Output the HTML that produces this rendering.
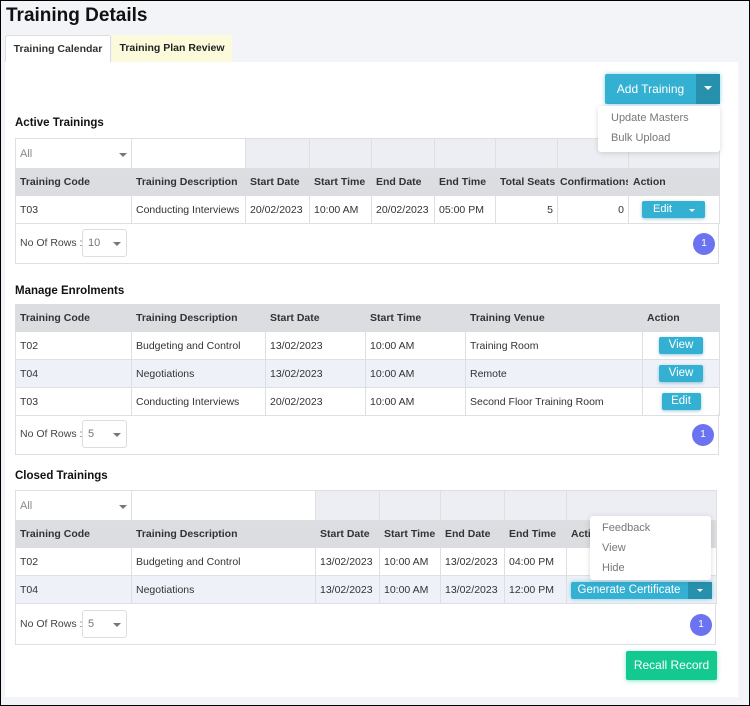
<!DOCTYPE html>
<html><head><style>
*{box-sizing:border-box;margin:0;padding:0}
body{width:750px;height:706px;overflow:hidden;background:#f3f4f8;font-family:"Liberation Sans",sans-serif;font-size:11px;color:#222;position:relative}
.frame{position:absolute;left:0;top:0;width:750px;height:706px;border:1px solid #000;z-index:10;pointer-events:none}
.a{position:absolute}
h1{position:absolute;left:6px;top:5px;font-size:19px;font-weight:bold;color:#111}
.tab{position:absolute;top:35px;height:27px;font-size:10.5px;font-weight:bold;line-height:26px;text-align:center;border-radius:3px 3px 0 0}
.panel{position:absolute;left:5px;top:62px;width:733px;height:635px;background:#fff}
.lbl{position:absolute;left:15px;font-size:11.5px;font-weight:bold;color:#111}
table{position:absolute;border-collapse:collapse;table-layout:fixed;left:15px}
td{border:1px solid #dedfe3;padding:0 4px;white-space:nowrap;overflow:hidden;font-size:10.5px;color:#333}
tr.f td{background:#eceef3;height:30px}
tr.f td.w{background:#fff;color:#888;font-size:11px}
tr.h td{background:#dcdde0;font-weight:bold;height:27px;color:#333;border-color:#dcdde0}
tr.r td{height:28px;background:#fff}
tr.alt td{background:#eef1f8}
.r2{text-align:right}
.car{float:right;width:0;height:0;border-left:4px solid transparent;border-right:4px solid transparent;border-top:4px solid #777;margin-top:5px}
.box{position:absolute;border:1px solid #dedfe3}
.nor{position:absolute;left:20px;color:#444;font-size:10.5px}
.sel{position:absolute;left:82px;width:45px;height:28px;border:1px solid #ddd;border-radius:3px;color:#777;font-size:11px;padding:7px 5px}
.badge{position:absolute;width:22px;height:22px;border-radius:50%;background:#6b73f0;color:#fff;font-size:10px;text-align:center;line-height:22px}
.btn{background:#34b0d2;color:#fff;border-radius:2px;text-align:center;box-shadow:0 1px 3px rgba(0,120,160,.4);font-size:11px;display:inline-block}
.dd{position:absolute;background:#fff;box-shadow:0 1px 6px rgba(0,0,0,.15);border-radius:3px;color:#777;font-size:11px;z-index:5}
.wc{border-left:4px solid transparent;border-right:4px solid transparent;border-top:4px solid #fff;width:0;height:0;display:inline-block}
</style></head><body>
<div class="frame"></div>
<h1>Training Details</h1>
<div class="tab" style="left:5px;width:106px;background:#fff;border:1px solid #ddd;border-bottom:none;color:#333">Training Calendar</div>
<div class="tab" style="left:112px;width:120px;background:#fbfbdc;color:#222">Training Plan Review</div>
<div class="panel"></div>

<div class="a" style="left:605px;top:74px;width:115px;height:30px;background:#34b0d2;box-shadow:0 0 4px rgba(52,176,210,.6);border-radius:2px"></div>
<div class="a" style="left:605px;top:74px;width:91px;height:30px;color:#fff;font-size:12px;text-align:center;line-height:30px">Add Training</div>
<div class="a" style="left:696px;top:74px;width:24px;height:30px;background:#2791ad;text-align:center;line-height:27px"><span class="wc"></span></div>
<div class="dd" style="left:598px;top:106px;width:122px;height:46px;padding:2px 13px;line-height:20px">Update Masters<br>Bulk Upload</div>

<div class="lbl" style="top:117px">Active Trainings</div>
<table style="top:138px;width:704px">
<colgroup><col style="width:116px"><col style="width:114px"><col style="width:64px"><col style="width:62px"><col style="width:63px"><col style="width:61px"><col style="width:62px"><col style="width:71px"><col style="width:91px"></colgroup>
<tr class="f"><td class="w">All<span class="car"></span></td><td class="w"></td><td></td><td></td><td></td><td></td><td></td><td></td><td></td></tr>
<tr class="h"><td>Training Code</td><td>Training Description</td><td>Start Date</td><td>Start Time</td><td>End Date</td><td>End Time</td><td>Total Seats</td><td style="padding:0 2px">Confirmations</td><td>Action</td></tr>
<tr class="r"><td>T03</td><td>Conducting Interviews</td><td>20/02/2023</td><td>10:00 AM</td><td>20/02/2023</td><td>05:00 PM</td><td class="r2">5</td><td class="r2">0</td><td><span class="btn" style="width:63px;height:17px;line-height:17px;margin-left:9px;text-align:left;padding-left:11px">Edit <span class="wc" style="margin-left:14px;border-width:3px;border-top-width:3px"></span></span></td></tr>
</table>
<div class="box" style="left:15px;top:223px;width:704px;height:41px;border-top:none"></div>
<div class="nor" style="top:237px">No Of Rows :</div>
<div class="sel" style="top:229px">10<span class="car"></span></div>
<div class="badge" style="left:693px;top:233px">1</div>

<div class="lbl" style="top:285px">Manage Enrolments</div>
<table style="top:304px;width:704px">
<colgroup><col style="width:116px"><col style="width:134px"><col style="width:100px"><col style="width:100px"><col style="width:177px"><col style="width:77px"></colgroup>
<tr class="h"><td>Training Code</td><td>Training Description</td><td>Start Date</td><td>Start Time</td><td>Training Venue</td><td>Action</td></tr>
<tr class="r"><td>T02</td><td>Budgeting and Control</td><td>13/02/2023</td><td>10:00 AM</td><td>Training Room</td><td style="text-align:center"><span class="btn" style="width:44px;height:17px;line-height:17px;font-size:11.5px">View</span></td></tr>
<tr class="r alt"><td>T04</td><td>Negotiations</td><td>13/02/2023</td><td>10:00 AM</td><td>Remote</td><td style="text-align:center"><span class="btn" style="width:44px;height:17px;line-height:17px;font-size:11.5px">View</span></td></tr>
<tr class="r"><td>T03</td><td>Conducting Interviews</td><td>20/02/2023</td><td>10:00 AM</td><td>Second Floor Training Room</td><td style="text-align:center"><span class="btn" style="width:39px;height:17px;line-height:17px;font-size:11.5px">Edit</span></td></tr>
</table>
<div class="box" style="left:15px;top:414px;width:704px;height:41px;border-top:none"></div>
<div class="nor" style="top:428px">No Of Rows :</div>
<div class="sel" style="top:420px">5<span class="car"></span></div>
<div class="badge" style="left:692px;top:424px">1</div>

<div class="lbl" style="top:470px">Closed Trainings</div>
<table style="top:490px;width:701px">
<colgroup><col style="width:116px"><col style="width:184px"><col style="width:64px"><col style="width:61px"><col style="width:64px"><col style="width:62px"><col style="width:150px"></colgroup>
<tr class="f"><td class="w">All<span class="car"></span></td><td class="w"></td><td></td><td></td><td></td><td></td><td></td></tr>
<tr class="h"><td>Training Code</td><td>Training Description</td><td>Start Date</td><td>Start Time</td><td>End Date</td><td>End Time</td><td>Action</td></tr>
<tr class="r"><td>T02</td><td>Budgeting and Control</td><td>13/02/2023</td><td>10:00 AM</td><td>13/02/2023</td><td>04:00 PM</td><td></td></tr>
<tr class="r alt"><td>T04</td><td>Negotiations</td><td>13/02/2023</td><td>10:00 AM</td><td>13/02/2023</td><td>12:00 PM</td><td></td></tr>
</table>
<div class="a" style="left:571px;top:582px;width:141px;height:17px;background:#34b0d2;box-shadow:0 0 4px rgba(52,176,210,.6);border-radius:2px"></div>
<div class="a" style="left:571px;top:582px;width:116px;height:17px;color:#fff;font-size:11.5px;text-align:center;line-height:17px">Generate Certificate</div>
<div class="a" style="left:688px;top:582px;width:24px;height:17px;background:#2791ad;text-align:center;line-height:14px"><span class="wc" style="border-width:3px"></span></div>
<div class="dd" style="left:590px;top:516px;width:121px;height:64px;padding:2px 12px;line-height:20px">Feedback<br>View<br>Hide</div>
<div class="box" style="left:15px;top:603px;width:701px;height:42px;border-top:none"></div>
<div class="nor" style="top:618px">No Of Rows :</div>
<div class="sel" style="top:610px">5<span class="car"></span></div>
<div class="badge" style="left:690px;top:614px">1</div>

<div class="a" style="left:626px;top:651px;width:91px;height:29px;background:#13c98f;color:#fff;font-size:12px;text-align:center;line-height:29px;border-radius:2px;box-shadow:0 1px 4px rgba(19,201,143,.5)">Recall Record</div>
</body></html>
